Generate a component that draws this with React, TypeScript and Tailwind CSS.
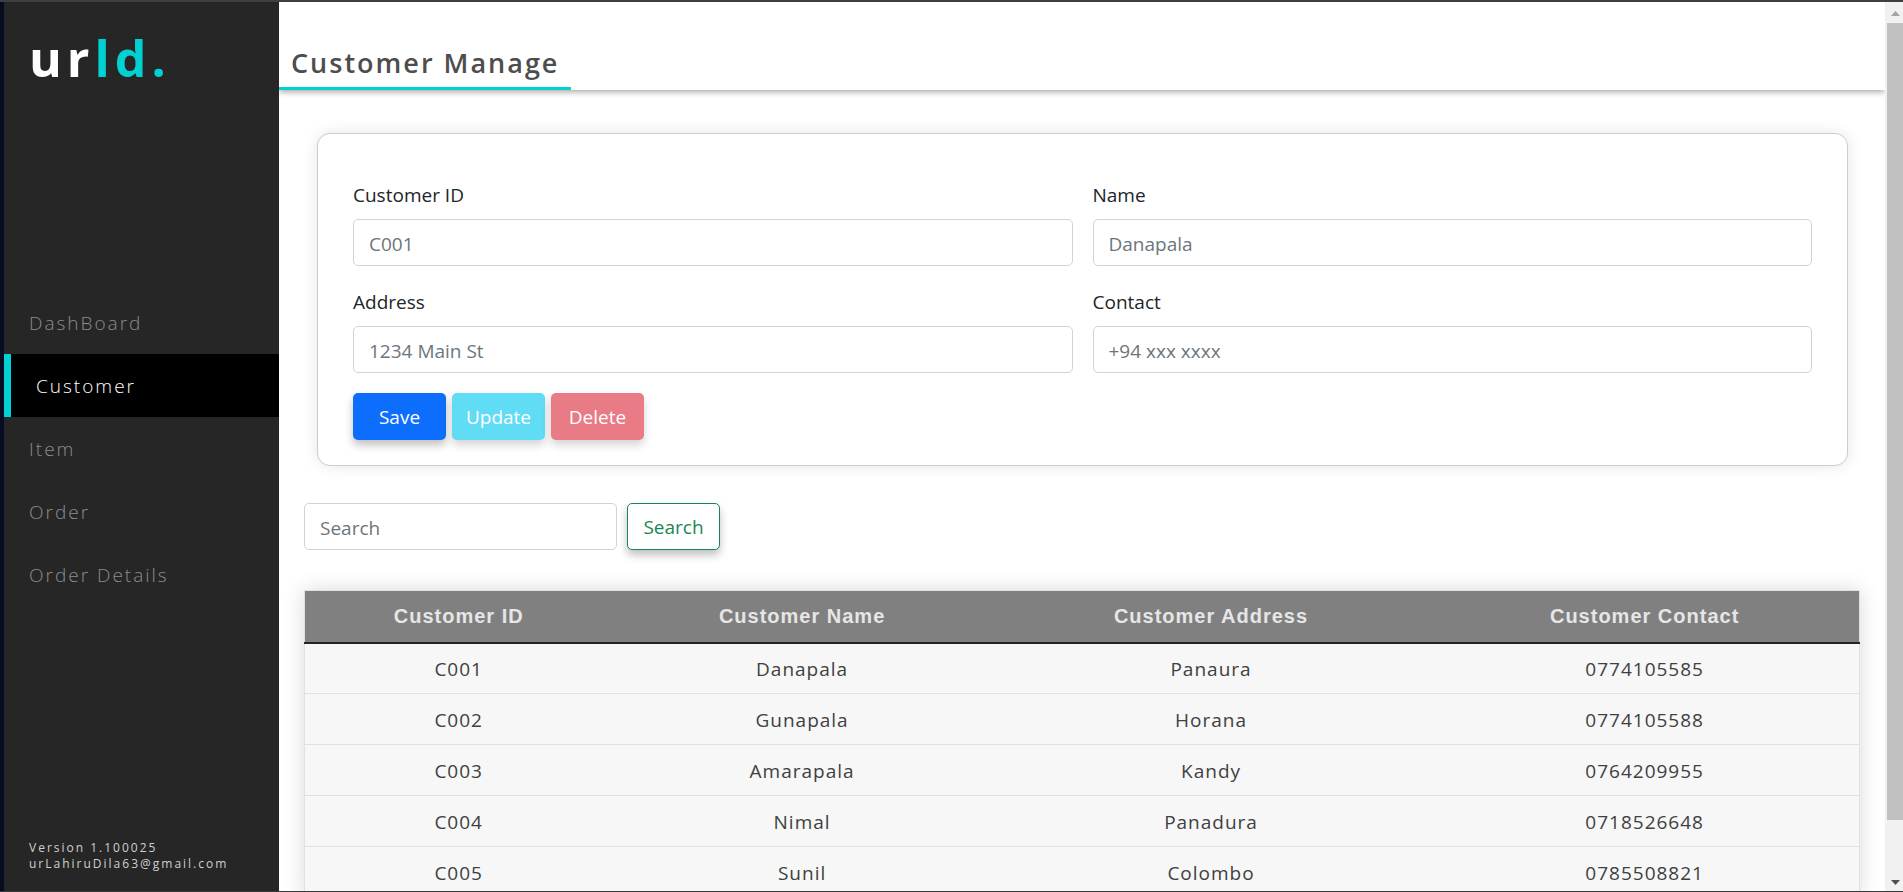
import { useState } from "react";

const navItems = ["DashBoard", "Customer", "Item", "Order", "Order Details"];

const customers = [
  ["C001", "Danapala", "Panaura", "0774105585"],
  ["C002", "Gunapala", "Horana", "0774105588"],
  ["C003", "Amarapala", "Kandy", "0764209955"],
  ["C004", "Nimal", "Panadura", "0718526648"],
  ["C005", "Sunil", "Colombo", "0785508821"],
];

const fields = [
  { id: "customer-id", label: "Customer ID", placeholder: "C001" },
  { id: "customer-name", label: "Name", placeholder: "Danapala" },
  { id: "customer-address", label: "Address", placeholder: "1234 Main St" },
  { id: "customer-contact", label: "Contact", placeholder: "+94 xxx xxxx" },
];

const inputClass =
  "h-[47px] rounded-[5px] border border-[#ced4da] bg-white px-[15px] pt-[2px] text-[19px] text-[#212529] outline-none placeholder:text-[#6c757d] placeholder:opacity-100";
const buttonClass =
  "h-[47px] w-[93px] rounded-[5px] pt-[2px] text-[19px] shadow-[0_5px_8px_rgba(0,0,0,0.25)]";

function Sidebar({ active, onSelect }: { active: string; onSelect: (name: string) => void }) {
  return (
    <aside className="flex w-[275px] shrink-0 flex-col bg-[#262626]">
      <div className="h-[289px] px-[25px] pt-[18px] text-[50px] leading-[76px] font-bold tracking-[5px] text-white">
        ur<span className="text-[#00d2d3]">ld.</span>
      </div>
      <nav className="flex flex-col">
        {navItems.map((name) => (
          <a
            key={name}
            href="#"
            onClick={() => onSelect(name)}
            className={
              name === active
                ? "flex h-[63px] items-center border-l-[7px] border-[#00d2d3] bg-black px-[25px] pt-[2px] text-[19px] font-light tracking-[2px] text-white"
                : "flex h-[63px] items-center px-[25px] pt-[2px] text-[19px] font-light tracking-[2px] text-[#8c8c8c]"
            }
          >
            {name}
          </a>
        ))}
      </nav>
      <footer className="mt-auto px-[25px] pb-[19px] text-[12px] leading-[16px] tracking-[2px] text-[#d0d0d0]">
        <p>Version 1.100025</p>
        <p>urLahiruDila63@gmail.com</p>
      </footer>
    </aside>
  );
}

function CustomerForm() {
  return (
    <form
      onSubmit={(e) => e.preventDefault()}
      className="mr-[12px] ml-[13px] rounded-[13px] border border-[#cccccc] bg-white px-[35px] pt-[45px] pb-[25px] shadow-[0_0_15px_rgba(0,0,0,0.1)]"
    >
      <div className="grid grid-cols-2 gap-5">
        {fields.map((f) => (
          <div key={f.id} className="flex flex-col gap-2">
            <label htmlFor={f.id} className="text-[19px] leading-8 text-[#212529]">
              {f.label}
            </label>
            <input id={f.id} type="text" placeholder={f.placeholder} className={inputClass} />
          </div>
        ))}
      </div>
      <div className="mt-5 flex gap-[6px]">
        <button type="submit" className={`${buttonClass} bg-[#0d6efd] text-white`}>
          Save
        </button>
        <button type="button" disabled className={`${buttonClass} bg-[#0dcaf0] text-white opacity-65`}>
          Update
        </button>
        <button type="button" disabled className={`${buttonClass} bg-[#dc3545] text-white opacity-65`}>
          Delete
        </button>
      </div>
    </form>
  );
}

function CustomerTable() {
  return (
    <table className="mt-[40px] w-full table-fixed border-collapse border border-[#dee2e6] text-center text-[19px] shadow-[0_0_20px_rgba(0,0,0,0.15)]">
      <colgroup>
        <col className="w-[19.8%]" />
        <col className="w-[24.4%]" />
        <col className="w-[28.2%]" />
        <col className="w-[27.6%]" />
      </colgroup>
      <thead className="bg-[#808080] font-['Liberation_Sans',sans-serif] text-[20px] tracking-[1px] text-[#e6e6e6]">
        <tr className="h-[52px] border-b-2 border-[#212529]">
          <th scope="col">Customer ID</th>
          <th scope="col">Customer Name</th>
          <th scope="col">Customer Address</th>
          <th scope="col">Customer Contact</th>
        </tr>
      </thead>
      <tbody className="bg-[#f7f7f7] tracking-[1px] text-[#404040]">
        {customers.map((row) => (
          <tr key={row[0]} className="h-[51px] border-b border-[#dee2e6]">
            {row.map((cell) => (
              <td key={cell} className="pt-[2px]">
                {cell}
              </td>
            ))}
          </tr>
        ))}
      </tbody>
    </table>
  );
}

function ScrollRail() {
  return (
    <div aria-hidden="true" className="flex w-[18px] shrink-0 flex-col bg-[#f1f1f1]">
      <svg viewBox="0 0 18 21" className="h-[21px] w-[18px] shrink-0" fill="#a3a3a3">
        <path d="M6 14 L10.500 9 L15 14 Z" />
      </svg>
      <div className="ml-[2px] flex-1 bg-[#c1c1c1]" />
      <div className="h-[50px] shrink-0" />
      <svg viewBox="0 0 18 21" className="h-[21px] w-[18px] shrink-0" fill="#505050">
        <path d="M6 10 L10.500 15 L15 10 Z" />
      </svg>
    </div>
  );
}

export default function App() {
  const [active, setActive] = useState("Customer");
  return (
    <div className="flex h-screen flex-col overflow-hidden border-t-2 border-b border-t-[#403e44] border-b-[#3a3a3e] bg-white font-['Open_Sans',sans-serif]">
      <div className="flex min-h-0 flex-1">
        <div aria-hidden="true" className="w-[4px] shrink-0 bg-[#080c22]" />
        <Sidebar active={active} onSelect={setActive} />
        <main className="min-w-0 flex-1 overflow-hidden">
          <header className="flex h-[88px] items-end shadow-[0_2px_6px_rgba(0,0,0,0.35)]">
            <h1 className="border-b-[3px] border-[#00d2d3] pr-[12px] pb-[3px] pl-[12px] text-[27px] leading-[42px] font-semibold tracking-[2px] text-[#4d4d4d]">
              Customer Manage
            </h1>
          </header>
          <div className="px-[25px] pt-[43px]">
            <CustomerForm />
            <form onSubmit={(e) => e.preventDefault()} className="mt-[37px] flex gap-[10px]">
              <input type="search" aria-label="Search" placeholder="Search" className={`${inputClass} w-[313px]`} />
              <button type="submit" className={`${buttonClass} border border-[#198754] bg-white text-[#198754]`}>
                Search
              </button>
            </form>
            <CustomerTable />
          </div>
        </main>
        <ScrollRail />
      </div>
    </div>
  );
}
